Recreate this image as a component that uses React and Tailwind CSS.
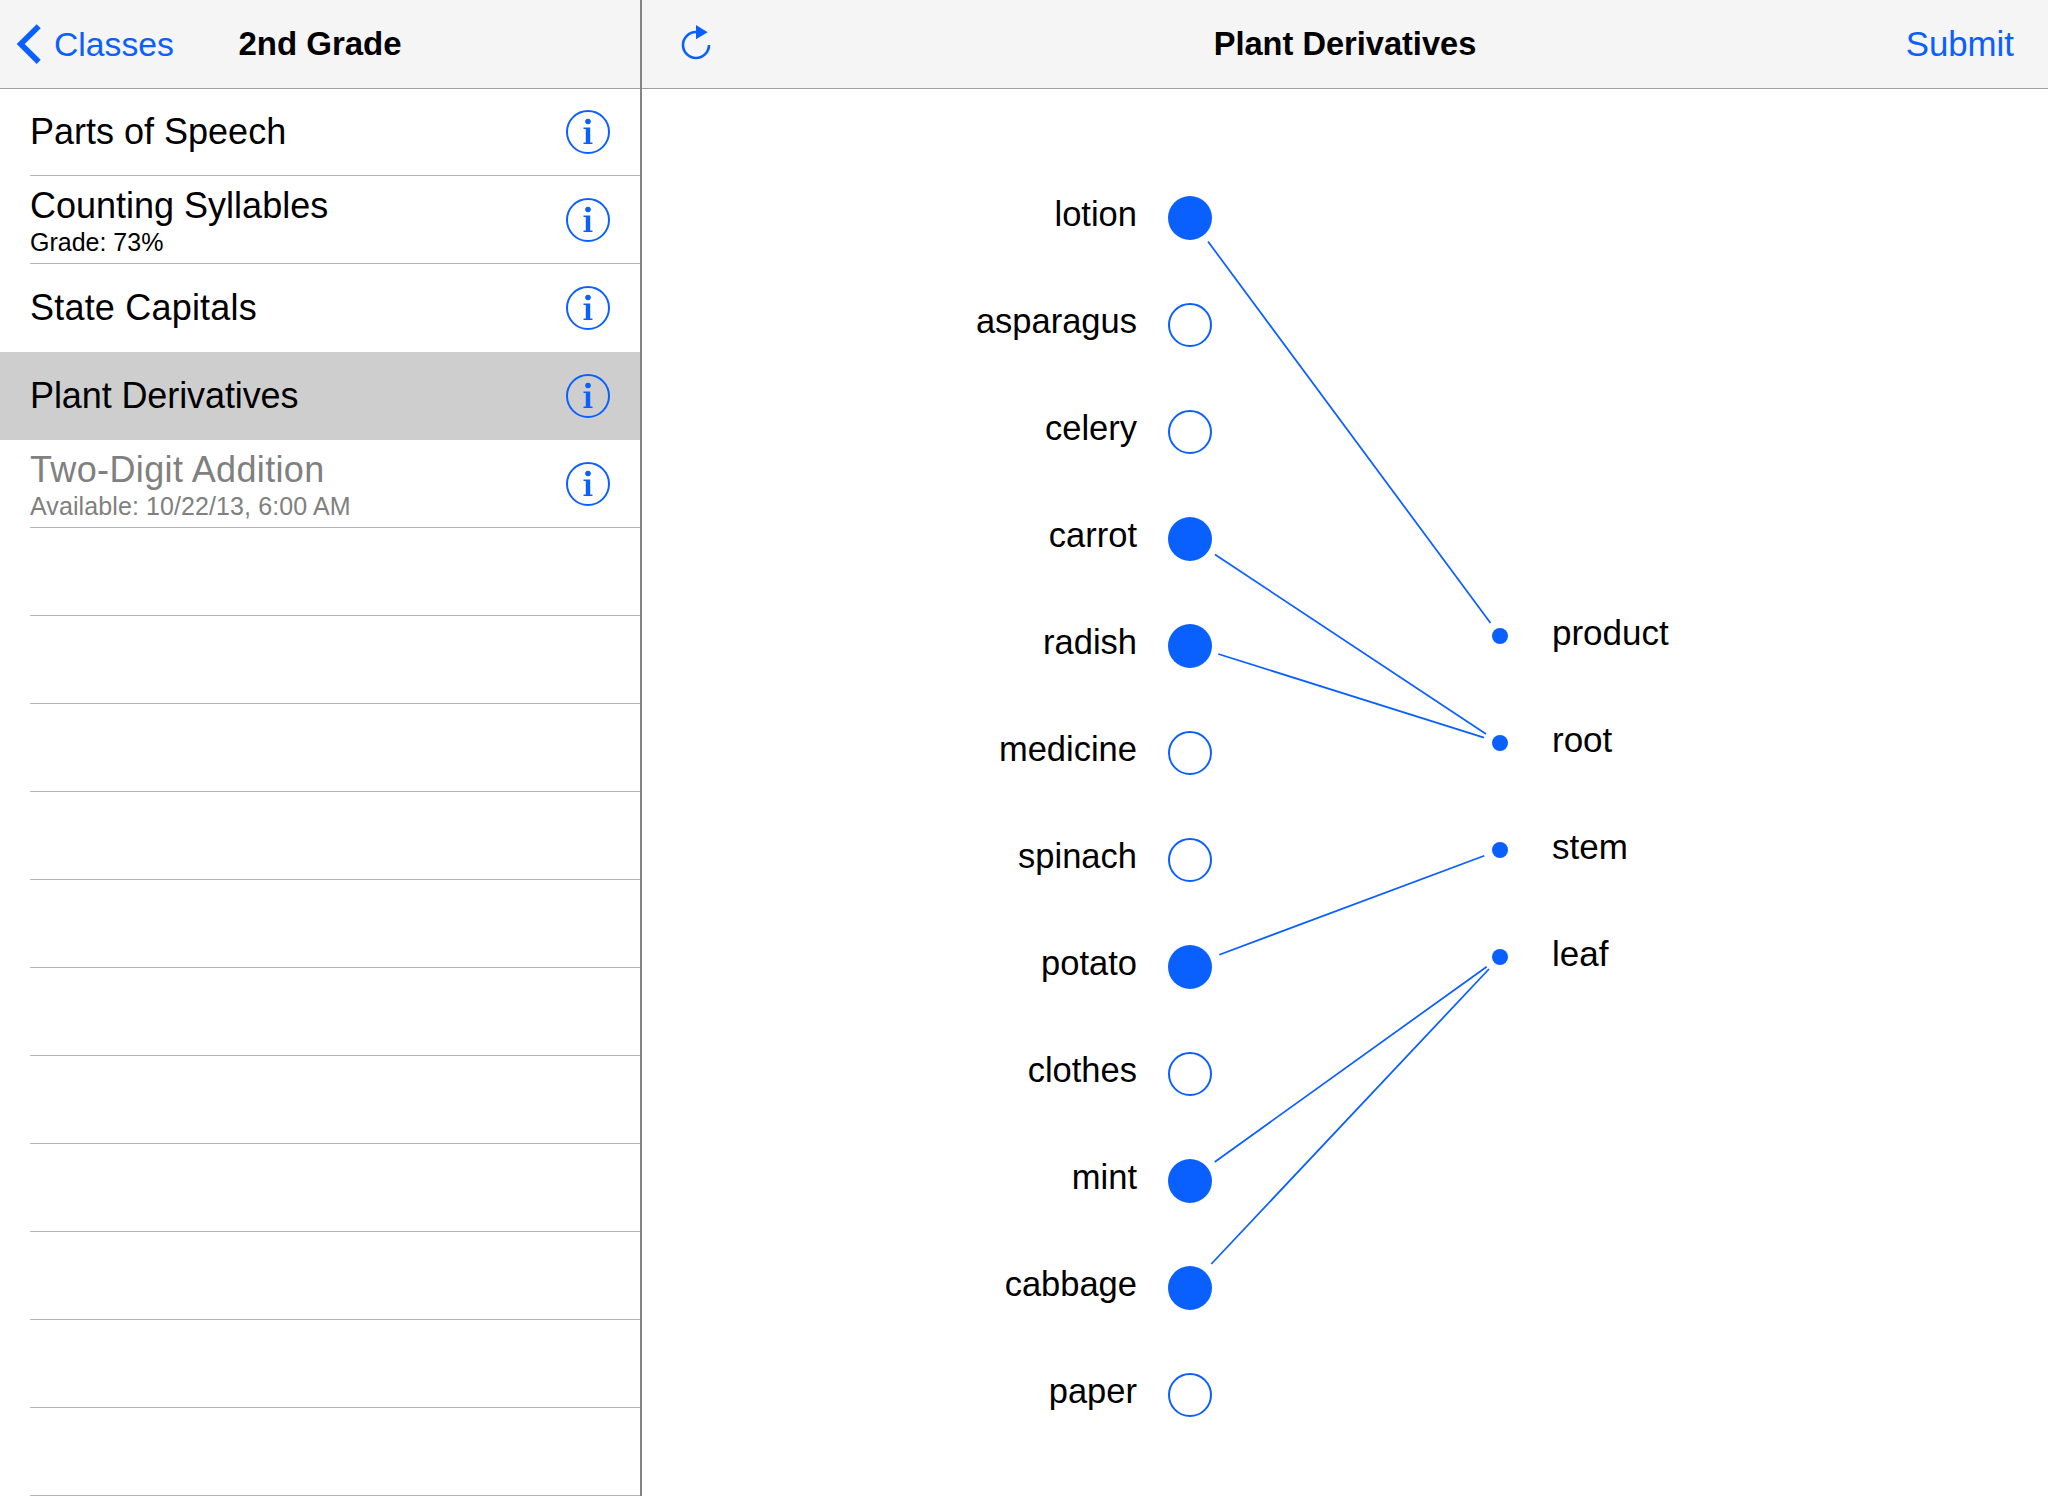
const BLUE = "#0a60ff";

function InfoIcon() {
  return (
    <svg width="44" height="44" viewBox="0 0 44 44" className="shrink-0">
      <circle cx="22" cy="22" r="21" fill="none" stroke="#0a60ff" strokeWidth="2" />
      <circle cx="22" cy="11.5" r="2.8" fill="#0a60ff" />
      <path d="M17.5 17.6H24.2V32.6H26.5V34H17.5V32.6H19.8V19H17.5Z" fill="#0a60ff" />
    </svg>
  );
}

const rows = [
  { title: "Parts of Speech", h: "h-[87px]" },
  { title: "Counting Syllables", sub: "Grade: 73%" },
  { title: "State Capitals", noLine: true, track: "tracking-[0.2px]" },
  { title: "Plant Derivatives", selected: true, noLine: true, track: "tracking-[-0.1px]" },
  { title: "Two-Digit Addition", sub: "Available: 10/22/13, 6:00 AM", muted: true, track: "tracking-[0.36px]", subTrack: "tracking-[0.1px]" },
];

function Row({ row }) {
  return (
    <div className={`${row.h || "h-[88px]"} flex ${row.selected ? "bg-[#cecece]" : ""} shrink-0`}>
      <div className={`flex-1 flex items-center justify-between pr-[30px] ml-[30px] border-b ${row.noLine ? "border-transparent" : "border-[#b4b4b8]"}`}>
        <div className={row.muted ? "text-[#808080]" : "text-black"}>
          {row.sub ? (
            <>
              <div className={`text-[36px] leading-[40px] mt-[3px] ${row.track || ""}`}>{row.title}</div>
              <div className={`text-[25px] leading-[28px] mt-[2px] ${row.subTrack || ""}`}>{row.sub}</div>
            </>
          ) : (
            <div className={`text-[36px] leading-[40px] ${row.track || ""}`}>{row.title}</div>
          )}
        </div>
        <InfoIcon />
      </div>
    </div>
  );
}

const left = [
  ["lotion", true],
  ["asparagus", false],
  ["celery", false],
  ["carrot", true],
  ["radish", true],
  ["medicine", false],
  ["spinach", false],
  ["potato", true],
  ["clothes", false],
  ["mint", true],
  ["cabbage", true],
  ["paper", false],
];

const right = ["product", "root", "stem", "leaf"];

const links = [
  [566, 152.5, 848.5, 534],
  [573, 465.5, 844, 645],
  [576.3, 565, 842, 648.7],
  [577.3, 865.7, 842.3, 766.7],
  [572.7, 1073, 844.7, 877.7],
  [569.3, 1175, 847, 880],
];

export default function App() {
  return (
    <div className="w-[2048px] h-[1496px] overflow-hidden flex bg-white text-black font-['Liberation_Sans',Arial,sans-serif]">
      <aside className="w-[642px] shrink-0 flex flex-col border-r-2 border-[#848488]">
        <header className="h-[89px] shrink-0 bg-[#f5f5f5] border-b border-[#a0a0a0] grid grid-cols-[1fr_auto_1fr] items-center">
          <div className="flex items-center">
            <svg width="26" height="42" viewBox="0 0 26 42" className="ml-[16px] shrink-0">
              <path d="M0.7 21L20.7 1.3L24.7 5.3L8.7 21L24.7 36.7L20.7 41Z" fill={BLUE} />
            </svg>
            <span className="ml-[12px] text-[33.7px] leading-[40px] text-[#0a60ff]">Classes</span>
          </div>
          <div className="text-[33px] leading-[40px] font-bold">2nd Grade</div>
          <div />
        </header>
        <div className="flex-1 flex flex-col overflow-hidden">
          {rows.map((r) => (
            <Row key={r.title} row={r} />
          ))}
          {Array.from({ length: 11 }).map((_, i) => (
            <div key={i} className="h-[88px] shrink-0 ml-[30px] border-b border-[#b4b4b8]" />
          ))}
        </div>
      </aside>
      <main className="flex-1 flex flex-col min-w-0">
        <header className="h-[89px] shrink-0 bg-[#f5f5f5] border-b border-[#a0a0a0] grid grid-cols-[1fr_auto_1fr] items-center">
          <div className="flex items-center">
            <svg width="40" height="40" viewBox="0 0 40 40" className="ml-[34px] mb-[8px] shrink-0">
              <path d="M20 12A13 13 0 1 0 33 25" fill="none" stroke={BLUE} strokeWidth="2.6" />
              <path d="M20 5L31.7 12.3L20 19.3Z" fill={BLUE} />
            </svg>
          </div>
          <div className="text-[32.6px] leading-[40px] font-bold">Plant Derivatives</div>
          <div className="flex justify-end pr-[34px] text-[34.8px] leading-[40px] text-[#0a60ff]">Submit</div>
        </header>
        <div className="relative flex-1 flex overflow-hidden">
          <div className="w-[570px] shrink-0 pt-[75.5px] flex flex-col">
            {left.map(([label, filled]) => (
              <div key={label} className="h-[107px] shrink-0 flex items-center justify-end gap-[31px]">
                <span className="text-[34.5px] leading-[40px] pb-[8px]">{label}</span>
                <div className={`w-[44px] h-[44px] rounded-full shrink-0 ${filled ? "bg-[#0a60ff]" : "border-2 border-[#0a60ff]"}`} />
              </div>
            ))}
          </div>
          <div className="ml-[280px] pt-[493.5px] flex flex-col">
            {right.map((label) => (
              <div key={label} className="h-[107px] shrink-0 flex items-center gap-[44px]">
                <div className="w-[16px] h-[16px] rounded-full bg-[#0a60ff] shrink-0" />
                <span className="text-[35px] leading-[40px] pb-[6px]">{label}</span>
              </div>
            ))}
          </div>
          <svg className="absolute inset-0 w-full h-full pointer-events-none">
            {links.map(([x1, y1, x2, y2], i) => (
              <line key={i} x1={x1} y1={y1} x2={x2} y2={y2} stroke={BLUE} strokeWidth="1.75" />
            ))}
          </svg>
        </div>
      </main>
    </div>
  );
}
